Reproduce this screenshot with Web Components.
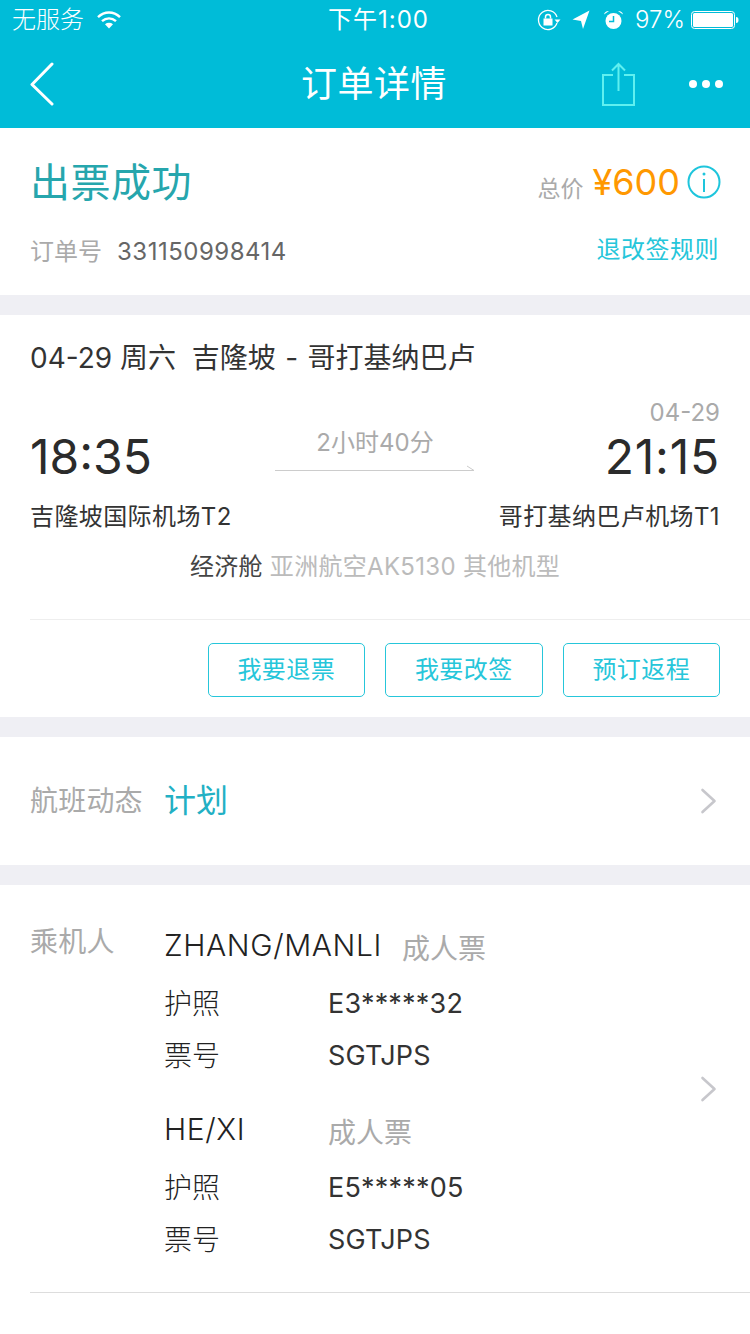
<!DOCTYPE html>
<html lang="zh">
<head>
<meta charset="utf-8">
<title>订单详情</title>
<style>
    html, body { margin: 0; padding: 0; background: #fff; }
    body {
        width: 750px;
        height: 1334px;
        overflow: hidden;
        font-family: Inter, "Noto Sans CJK SC", sans-serif;
    }
</style>
</head>
<body>
<status-bar></status-bar>
<nav-bar>订单详情</nav-bar>
<order-summary></order-summary>
<flight-card></flight-card>
<flight-status></flight-status>
<passenger-list>
    <passenger-item name="ZHANG/MANLI" kind="成人票" passport="E3*****32" ticket="SGTJPS" inline-kind></passenger-item>
    <passenger-item name="HE/XI" kind="成人票" passport="E5*****05" ticket="SGTJPS"></passenger-item>
</passenger-list>

<script>
const FONT = 'Inter, "Noto Sans CJK SC", sans-serif';
const CHEVRON = `<svg width="18" height="26" viewBox="0 0 18 26" fill="none" stroke="#c7c7cc" stroke-width="2.6" stroke-linecap="round" stroke-linejoin="round"><path d="M2.500 2l12 11-12 11"/></svg>`;

class StatusBar extends HTMLElement {
    constructor() {
        super();
        this.attachShadow({ mode: 'open' });
    }

    connectedCallback() {
        this.shadowRoot.innerHTML = `
            <style>
                :host {
                    display: grid;
                    grid-template-columns: 1fr auto 1fr;
                    align-items: center;
                    height: 40px;
                    padding: 0 11px 0 12px;
                    box-sizing: border-box;
                    background: #00bcd8;
                    color: #fff;
                    font: 300 24px/40px ${FONT};
                }
                .left, .right { display: flex; align-items: center; }
                .right { justify-content: flex-end; }
                .wifi { margin-left: 13px; }
                .lock { margin-right: 11px; }
                .arrow { margin-right: 13px; }
                .alarm { margin-right: 11px; }
                .batt { margin-left: 6px; }
                .time { font-weight: 400; letter-spacing: 1px; margin-left: 6px; }
            </style>
            <div class="left">
                <span>无服务</span>
                <svg class="wifi" width="24" height="18" viewBox="0 0 24 18" fill="none" stroke="#fff" stroke-width="2.4">
                    <path d="M1 6.200C7.500 0 16.500 0 23 6.200"/>
                    <path d="M5 10.200C9.200 6.400 14.800 6.400 19 10.200"/>
                    <path d="M12 17.500l-4-4.300c2.400-1.800 5.600-1.800 8 0z" fill="#fff" stroke="none"/>
                </svg>
            </div>
            <div class="time">下午1:00</div>
            <div class="right">
                <svg class="lock" width="24" height="22" viewBox="0 0 24 22" fill="none" stroke="#fff" stroke-width="1.300">
                    <path d="M20 14A9.500 9.500 0 1 1 20 8"/>
                    <path d="M17.500 10.500h6l-3 3.500z" fill="#fff" stroke="none"/>
                    <rect x="6.500" y="9.500" width="9" height="7" fill="#fff" stroke="none"/>
                    <path d="M8.500 9.500V8a2.500 2.500 0 0 1 5 0v1.500" stroke-width="1.500"/>
                </svg>
                <svg class="arrow" width="18" height="20" viewBox="0 0 18 20">
                    <path d="M0.500 9.500L17.500 0.500L11 19L9 11z" fill="#fff"/>
                </svg>
                <svg class="alarm" width="21" height="20" viewBox="0 0 21 20">
                    <path d="M1 4.500C1.500 2 3.500 0.800 6 1z" fill="#fff"/>
                    <path d="M20 4.500C19.500 2 17.500 0.800 15 1z" fill="#fff"/>
                    <circle cx="10.500" cy="11" r="8" fill="#fff"/>
                    <path d="M10.500 6v5.500H6" fill="none" stroke="#00bcd8" stroke-width="1.500"/>
                </svg>
                <span>97%</span>
                <svg class="batt" width="48" height="20" viewBox="0 0 48 20">
                    <rect x="0.500" y="1.500" width="43" height="17" rx="3" fill="none" stroke="#fff"/>
                    <rect x="2" y="3" width="40" height="14" rx="1.500" fill="#fff"/>
                    <path d="M45 7c1.800 0 2.500 1 2.500 3s-.7 3-2.500 3z" fill="#fff"/>
                </svg>
            </div>
        `;
    }
}
customElements.define('status-bar', StatusBar);

class NavBar extends HTMLElement {
    constructor() {
        super();
        this.attachShadow({ mode: 'open' });
    }

    connectedCallback() {
        this.shadowRoot.innerHTML = `
            <style>
                :host {
                    display: flex;
                    align-items: center;
                    justify-content: space-between;
                    height: 88px;
                    padding: 0 27px 0 30px;
                    box-sizing: border-box;
                    background: #00bcd8;
                    color: #fff;
                    position: relative;
                }
                .title {
                    position: absolute;
                    left: 0;
                    right: 2px;
                    top: 20px;
                    text-align: center;
                    font: 36px/48px ${FONT};
                    letter-spacing: 0.500px;
                }
                .actions { display: flex; align-items: center; gap: 54px; }
            </style>
            <svg width="24" height="44" viewBox="0 0 24 44" fill="none" stroke="#fff" stroke-width="3" stroke-linecap="round" stroke-linejoin="round">
                <path d="M22 2L2 22.500 22 42"/>
            </svg>
            <div class="title"><slot></slot></div>
            <div class="actions">
                <svg width="33" height="44" viewBox="0 0 33 44" fill="none" stroke="#5ff0f0" stroke-width="2">
                    <path d="M11 13H1v30h31V13H22"/>
                    <path d="M16.500 29V2M10 8.500l6.500-6.500L23 8.500"/>
                </svg>
                <svg width="34" height="8" viewBox="0 0 34 8" fill="#fff">
                    <circle cx="4" cy="4" r="4"/>
                    <circle cx="17" cy="4" r="4"/>
                    <circle cx="30" cy="4" r="4"/>
                </svg>
            </div>
        `;
    }
}
customElements.define('nav-bar', NavBar);

class OrderSummary extends HTMLElement {
    constructor() {
        super();
        this.attachShadow({ mode: 'open' });
    }

    connectedCallback() {
        this.shadowRoot.innerHTML = `
            <style>
                :host {
                    display: block;
                    height: 187px;
                    box-sizing: border-box;
                    padding: 27px 29px 0 30px;
                    background: #fff;
                    border-bottom: 20px solid #efeff4;
                    font-family: ${FONT};
                }
                .row { display: flex; justify-content: space-between; }
                .top { align-items: center; height: 56px; }
                .state { font-size: 40px; line-height: 56px; color: #26a6ad; letter-spacing: 0.500px; }
                .price { display: flex; align-items: center; margin-top: -3px; }
                .total { font-size: 23px; color: #aaa; margin-right: 9px; margin-top: 10px; }
                .amount { font-size: 36px; font-weight: 400; color: #ff9800; margin-right: 7px; }
                .bottom { align-items: center; margin-top: 20px; height: 36px; padding-right: 2px; }
                .no { font-size: 24px; color: #aaa; }
                .no b { font-weight: 400; color: #666; margin-left: 15px; letter-spacing: 0.500px; }
                .rule { font-size: 24px; color: #26c6da; letter-spacing: 0.500px; margin-top: -4px; }
            </style>
            <div class="row top">
                <div class="state">出票成功</div>
                <div class="price">
                    <span class="total">总价</span>
                    <span class="amount">¥600</span>
                    <svg width="34" height="34" viewBox="0 0 34 34" fill="none" stroke="#1ec5dc" stroke-width="2">
                        <circle cx="17" cy="17" r="15.500"/>
                        <path d="M17 14v13"/>
                        <circle cx="17" cy="9" r="1.500" fill="#1ec5dc" stroke="none"/>
                    </svg>
                </div>
            </div>
            <div class="row bottom">
                <div class="no">订单号<b>331150998414</b></div>
                <div class="rule">退改签规则</div>
            </div>
        `;
    }
}
customElements.define('order-summary', OrderSummary);

class FlightCard extends HTMLElement {
    constructor() {
        super();
        this.attachShadow({ mode: 'open' });
    }

    connectedCallback() {
        this.shadowRoot.innerHTML = `
            <style>
                :host {
                    display: block;
                    height: 422px;
                    box-sizing: border-box;
                    background: #fff;
                    border-bottom: 20px solid #efeff4;
                    font-family: ${FONT};
                    color: #333;
                }
                .head { padding: 24px 30px 0; font-size: 28px; line-height: 38px; }
                .head span { word-spacing: 1.500px; }
                .times {
                    display: grid;
                    grid-template-columns: 1fr 200px 1fr;
                    margin: 42px 30px 0;
                    height: 72px;
                }
                .time { font-size: 48px; font-weight: 400; line-height: 56px; color: #2b2b2b; padding-top: 10px; }
                .arr { text-align: right; position: relative; letter-spacing: 0.800px; }
                .date { position: absolute; right: 0; top: -21px; font-size: 24px; font-weight: 400; line-height: 30px; letter-spacing: 0; color: #aaa; }
                .dur { text-align: center; font-size: 24px; line-height: 30px; color: #aaa; padding-top: 9px; }
                .dur svg { display: block; margin-top: 6px; }
                .ports { display: flex; justify-content: space-between; margin: 9px 30px 0; font-size: 24px; line-height: 34px; letter-spacing: 0.400px; }
                .cabin { text-align: center; margin-top: 16px; font-size: 24px; line-height: 34px; color: #444; letter-spacing: 0.300px; }
                .cabin span { color: #bbb; }
                .actions {
                    display: flex;
                    justify-content: flex-end;
                    gap: 20px;
                    margin: 35px 0 0 30px;
                    padding: 23px 30px 0 0;
                    border-top: 1px solid #eee;
                }
                .btn {
                    width: 157.500px;
                    height: 54px;
                    box-sizing: border-box;
                    border: 1px solid #26c6da;
                    border-radius: 5px;
                    text-align: center;
                    font-size: 24px;
                    line-height: 52px;
                    letter-spacing: 0.400px;
                    color: #26c6da;
                }
            </style>
            <div class="head">04-29 周六&nbsp; <span>吉隆坡 - 哥打基纳巴卢</span></div>
            <div class="times">
                <div class="time">18:35</div>
                <div class="dur">2小时40分
                    <svg width="200" height="8" viewBox="0 0 200 8" fill="none" stroke="#ccc">
                        <path d="M0 6.500H199L192 2"/>
                    </svg>
                </div>
                <div class="time arr"><span class="date">04-29</span>21:15</div>
            </div>
            <div class="ports"><span>吉隆坡国际机场T2</span><span>哥打基纳巴卢机场T1</span></div>
            <div class="cabin">经济舱 <span>亚洲航空AK5130 其他机型</span></div>
            <div class="actions">
                <div class="btn">我要退票</div>
                <div class="btn">我要改签</div>
                <div class="btn">预订返程</div>
            </div>
        `;
    }
}
customElements.define('flight-card', FlightCard);

class FlightStatus extends HTMLElement {
    constructor() {
        super();
        this.attachShadow({ mode: 'open' });
    }

    connectedCallback() {
        this.shadowRoot.innerHTML = `
            <style>
                :host {
                    display: flex;
                    align-items: center;
                    height: 148px;
                    box-sizing: border-box;
                    padding: 0 32px 0 30px;
                    background: #fff;
                    border-bottom: 20px solid #efeff4;
                    font-family: ${FONT};
                }
                .label { font-size: 28px; color: #aaa; width: 134px; margin-top: -4px; letter-spacing: 0.200px; }
                .value { font-size: 32px; color: #22b0c4; flex: 1; margin-top: -6px; }
            </style>
            <span class="label">航班动态</span>
            <span class="value">计划</span>
            ${CHEVRON}
        `;
    }
}
customElements.define('flight-status', FlightStatus);

class PassengerList extends HTMLElement {
    constructor() {
        super();
        this.attachShadow({ mode: 'open' });
    }

    connectedCallback() {
        this.shadowRoot.innerHTML = `
            <style>
                :host {
                    display: grid;
                    grid-template-columns: 134px 1fr auto;
                    align-items: center;
                    margin-left: 30px;
                    padding: 28px 32px 27px 0;
                    height: 408px;
                    box-sizing: border-box;
                    border-bottom: 1px solid #ddd;
                    font-family: ${FONT};
                }
                .label { align-self: start; margin-top: 7px; font-size: 28px; line-height: 44px; color: #aaa; letter-spacing: 0.200px; }
                .list { display: flex; flex-direction: column; gap: 16px; }
            </style>
            <div class="label">乘机人</div>
            <div class="list"><slot></slot></div>
            ${CHEVRON}
        `;
    }
}
customElements.define('passenger-list', PassengerList);

class PassengerItem extends HTMLElement {
    constructor() {
        super();
        this.attachShadow({ mode: 'open' });
    }

    get name() {
        return this.getAttribute('name');
    }

    get kind() {
        return this.getAttribute('kind');
    }

    get passport() {
        return this.getAttribute('passport');
    }

    get ticket() {
        return this.getAttribute('ticket');
    }

    connectedCallback() {
        const inline = this.hasAttribute('inline-kind');
        this.shadowRoot.innerHTML = `
            <style>
                :host {
                    display: grid;
                    grid-template-columns: 164px auto;
                    grid-template-rows: 64px 52px 52px;
                    align-items: center;
                    font-size: 28px;
                    font-weight: 300;
                    color: #222;
                }
                .name { font-size: 30px; font-weight: 300; letter-spacing: 0.600px; }
                .kind { font-size: 28px; font-weight: 400; color: #aaa; margin-top: 3px; }
                .wide { grid-column: span 2; display: flex; align-items: center; }
                .wide .kind { margin-left: 20px; }
                .cap { margin-top: -3px; }
                .val { font-size: 27px; font-weight: 400; color: #333; letter-spacing: 0.200px; }
            </style>
            ${inline
                ? `<div class="wide"><span class="name">${this.name}</span><span class="kind">${this.kind}</span></div>`
                : `<div class="name">${this.name}</div><div class="kind">${this.kind}</div>`}
            <div class="cap">护照</div><div class="val">${this.passport}</div>
            <div class="cap">票号</div><div class="val">${this.ticket}</div>
        `;
    }
}
customElements.define('passenger-item', PassengerItem);
</script>
</body>
</html>
